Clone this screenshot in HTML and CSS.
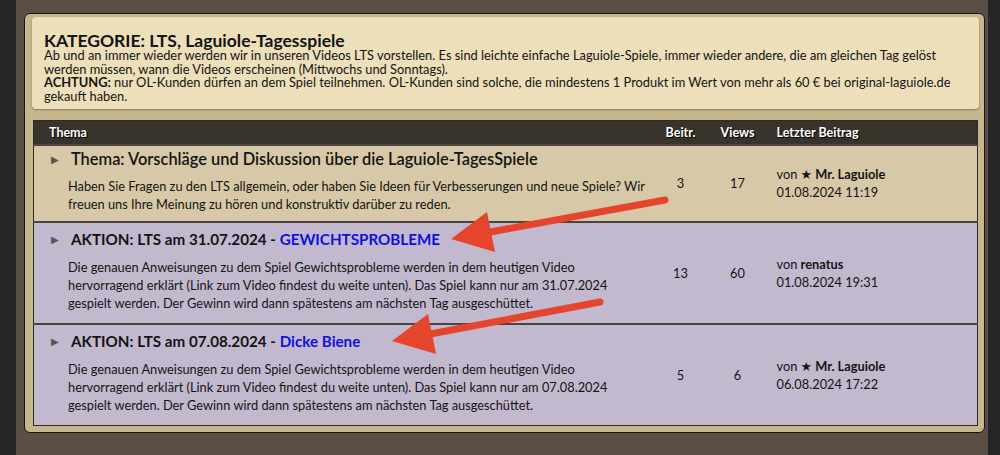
FILE: index.html
```html
<!DOCTYPE html>
<html lang="de">
<head>
    <meta charset="UTF-8">
    <meta name="viewport" content="width=device-width, initial-scale=1.0">
    <link rel="stylesheet" href="styles.css">
    <title>LTS, Laguiole-Tagesspiele</title>
</head>
<body>
    <div class="page">
        <div class="panel">
            <div class="category">
                <h1>KATEGORIE: LTS, Laguiole-Tagesspiele</h1>
                <p>Ab und an immer wieder werden wir in unseren Videos LTS vorstellen. Es sind leichte einfache Laguiole-Spiele, immer wieder andere, die am gleichen Tag gelöst werden müssen, wann die Videos erscheinen (Mittwochs und Sonntags).<br>
                <b>ACHTUNG:</b> nur OL-Kunden dürfen an dem Spiel teilnehmen. OL-Kunden sind solche, die mindestens 1 Produkt im Wert von mehr als 60 € bei original-laguiole.de gekauft haben.</p>
            </div>

            <table class="topics">
                <colgroup>
                    <col>
                    <col class="col-posts">
                    <col class="col-views">
                    <col class="col-last">
                </colgroup>
                <thead>
                    <tr>
                        <th class="th-topic">Thema</th>
                        <th>Beitr.</th>
                        <th>Views</th>
                        <th class="th-last">Letzter Beitrag</th>
                    </tr>
                </thead>
                <tbody>
                    <tr class="sticky">
                        <td class="topic">
                            <div class="title"><span class="arrow">&#9654;</span><span class="normal">Thema: Vorschläge und Diskussion über die Laguiole-TagesSpiele</span></div>
                            <div class="desc">Haben Sie Fragen zu den LTS allgemein, oder haben Sie Ideen für Verbesserungen und neue Spiele? Wir freuen uns Ihre Meinung zu hören und konstruktiv darüber zu reden.</div>
                        </td>
                        <td class="num">3</td>
                        <td class="num">17</td>
                        <td class="last">von <b>&#9733; Mr. Laguiole</b><br>01.08.2024 11:19</td>
                    </tr>
                    <tr class="action">
                        <td class="topic">
                            <div class="title"><span class="arrow">&#9654;</span>AKTION: LTS am 31.07.2024 - <a href="#">GEWICHTSPROBLEME</a></div>
                            <div class="desc">Die genauen Anweisungen zu dem Spiel Gewichtsprobleme werden in dem heutigen Video hervorragend erklärt (Link zum Video findest du weite unten). Das Spiel kann nur am 31.07.2024 gespielt werden. Der Gewinn wird dann spätestens am nächsten Tag ausgeschüttet.</div>
                        </td>
                        <td class="num">13</td>
                        <td class="num">60</td>
                        <td class="last">von <b>renatus</b><br>01.08.2024 19:31</td>
                    </tr>
                    <tr class="action">
                        <td class="topic">
                            <div class="title"><span class="arrow">&#9654;</span>AKTION: LTS am 07.08.2024 - <a href="#">Dicke Biene</a></div>
                            <div class="desc">Die genauen Anweisungen zu dem Spiel Gewichtsprobleme werden in dem heutigen Video hervorragend erklärt (Link zum Video findest du weite unten). Das Spiel kann nur am 07.08.2024 gespielt werden. Der Gewinn wird dann spätestens am nächsten Tag ausgeschüttet.</div>
                        </td>
                        <td class="num">5</td>
                        <td class="num">6</td>
                        <td class="last">von <b>&#9733; Mr. Laguiole</b><br>06.08.2024 17:22</td>
                    </tr>
                </tbody>
            </table>
        </div>
    </div>

    <!-- red annotation arrows drawn over the list -->
    <svg class="marks" width="1000" height="455" viewBox="0 0 1000 455">
        <line x1="665" y1="200" x2="485" y2="233" stroke="#e5452c" stroke-width="7" stroke-linecap="round"/>
        <polygon points="451,239 487,212 495,252" fill="#e5452c"/>
        <line x1="600" y1="302" x2="425" y2="335" stroke="#e5452c" stroke-width="7" stroke-linecap="round"/>
        <polygon points="392,341 428,314 436,354" fill="#e5452c"/>
    </svg>
</body>
</html>
```

FILE: styles.css
```css
* {
    box-sizing: border-box;
}

body {
    margin: 0;
    background-color: #262626;
    font-family: Lato, "DejaVu Sans", sans-serif;
    color: #141414;
}

.page {
    margin: 0 12px 0 16px;
    min-height: 455px;
    padding: 13px 3px 20px 8px;
    background-color: #5b4e44;
}

.panel {
    background-color: #c7b78f;
    border: 1px solid #151515;
    border-radius: 6px;
    padding: 3px 5px 6px 7px;
}

.category {
    background-color: #ecdfba;
    border-radius: 4px;
    box-shadow: 0 1px 2px rgba(0, 0, 0, 0.35);
    padding: 15px 4px 6px 12px;
}

.category h1 {
    margin: 0;
    font-size: 17.5px;
    line-height: 17px;
    font-weight: bold;
}

.category p {
    margin: 0;
    font-size: 12.85px;
    line-height: 13.5px;
}

.topics {
    width: 945px;
    margin: 11px 0 0 1px;
    border-collapse: collapse;
    border: 1px solid #2e2a25;
}

.col-posts {
    width: 58px;
}

.col-views {
    width: 56px;
}

.col-last {
    width: 212px;
}

.topics th {
    background-color: #38332d;
    color: #fff;
    font-size: 12.5px;
    font-weight: bold;
    height: 24px;
    padding: 0;
    text-align: center;
    text-shadow: 1px 1px 1px #000;
}

.topics .th-topic {
    text-align: left;
    padding-left: 15px;
}

.topics .th-last {
    text-align: left;
    padding-left: 11px;
}

.topics td {
    border-top: 2px solid #4b443c;
    vertical-align: middle;
    font-size: 12.8px;
}

.sticky td {
    background-color: #d7c9a7;
}

.action td {
    background-color: #c3b9cf;
}

.topic {
    padding: 7px 0 11px 17px;
}

.sticky .topic {
    padding-top: 3px;
    padding-bottom: 8px;
}

.title {
    font-size: 15.2px;
    font-weight: bold;
    line-height: 19px;
}

.title .normal {
    font-size: 16.4px;
    font-weight: 600;
}

.title a {
    color: #1010e0;
    text-decoration: none;
}

.arrow {
    display: inline-block;
    width: 20px;
    font-size: 10px;
    color: #5a5550;
    vertical-align: 2px;
}

.desc {
    margin: 9px 0 0 17px;
    line-height: 18px;
}

.sticky .desc {
    margin-top: 8px;
}

.num {
    text-align: center;
    font-size: 14px;
}

.last {
    padding-left: 11px;
    line-height: 18px;
}

.marks {
    position: absolute;
    top: 0;
    left: 0;
    pointer-events: none;
}
```
